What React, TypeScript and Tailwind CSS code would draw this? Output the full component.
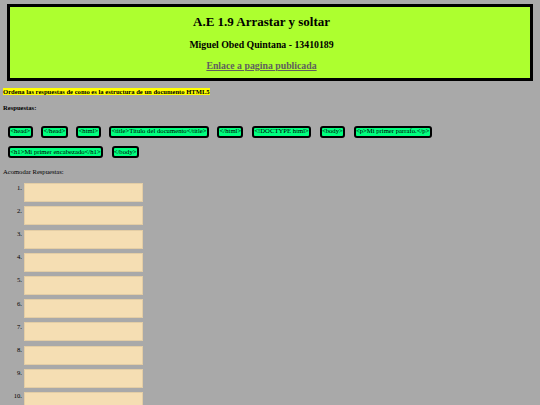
import React from "react";

const tagsRow1 = [
  "<head>",
  "</head>",
  "<html>",
  "<title>Titulo del documento</title>",
  "</html>",
  "<!DOCTYPE html>",
  "<body>",
  "<p>Mi primer parrafo.</p>",
];
const tagsRow2 = ["<h1>Mi primer encabezado</h1>", "</body>"];

function Tag({ label }: { label: string }) {
  return (
    <div className="h-[12px] border-2 border-black rounded-[3px] bg-[#00ff7f] px-[0.2px] flex items-center text-[6.7px] leading-none text-black whitespace-pre">
      {label}
    </div>
  );
}

export default function App() {
  const nums = [1, 2, 3, 4, 5, 6, 7, 8, 9, 10];
  return (
    <div className="min-h-[405px] bg-[#a9a9a9] font-['Liberation_Serif',serif] text-black pt-[4px] overflow-hidden">
      <div className="mx-[7px] h-[77px] border-[3px] border-black bg-[#adff2f] flex flex-col items-center pt-[7px] pr-[17px]">
        <div className="text-[13px] leading-[16px] font-bold">A.E 1.9 Arrastar y soltar</div>
        <div className="mt-[9px] text-[9.8px] leading-[12px] font-bold">Miguel Obed Quintana - 13410189</div>
        <a className="mt-[9px] text-[9.8px] leading-[12px] font-bold text-[#5f5f5f] underline">Enlace a pagina publicada</a>
      </div>

      <div className="ml-[3px] mt-[7px] text-[6.6px] leading-[8.7px] font-bold">
        <span className="bg-[#ffff00]">Ordena las respuestas de como es la estructura de un documento HTML5</span>
      </div>

      <div className="ml-[3px] mt-[7px] text-[6.6px] leading-[8px] font-bold">Respuestas:</div>

      <div className="ml-[8px] mt-[14px] flex flex-col gap-[8.5px]">
        <div className="flex gap-[8.7px]">
          {tagsRow1.map((t) => (
            <Tag key={t} label={t} />
          ))}
        </div>
        <div className="flex gap-[8.7px]">
          {tagsRow2.map((t) => (
            <Tag key={t} label={t} />
          ))}
        </div>
      </div>

      <div className="ml-[3px] mt-[10px] text-[6.6px] leading-[8px]">Acomodar Respuestas:</div>

      <div className="mt-[7px] flex flex-col gap-[4.2px]">
        {nums.map((n) => (
          <div key={n} className="flex items-start">
            <div className="w-[24px] pr-[2px] text-right text-[6.6px] leading-[8px] pt-[0.5px]">{n}.</div>
            <div className="w-[119px] h-[19px] bg-[#f5deb3] border border-[#e3cda5]"></div>
          </div>
        ))}
      </div>
    </div>
  );
}
